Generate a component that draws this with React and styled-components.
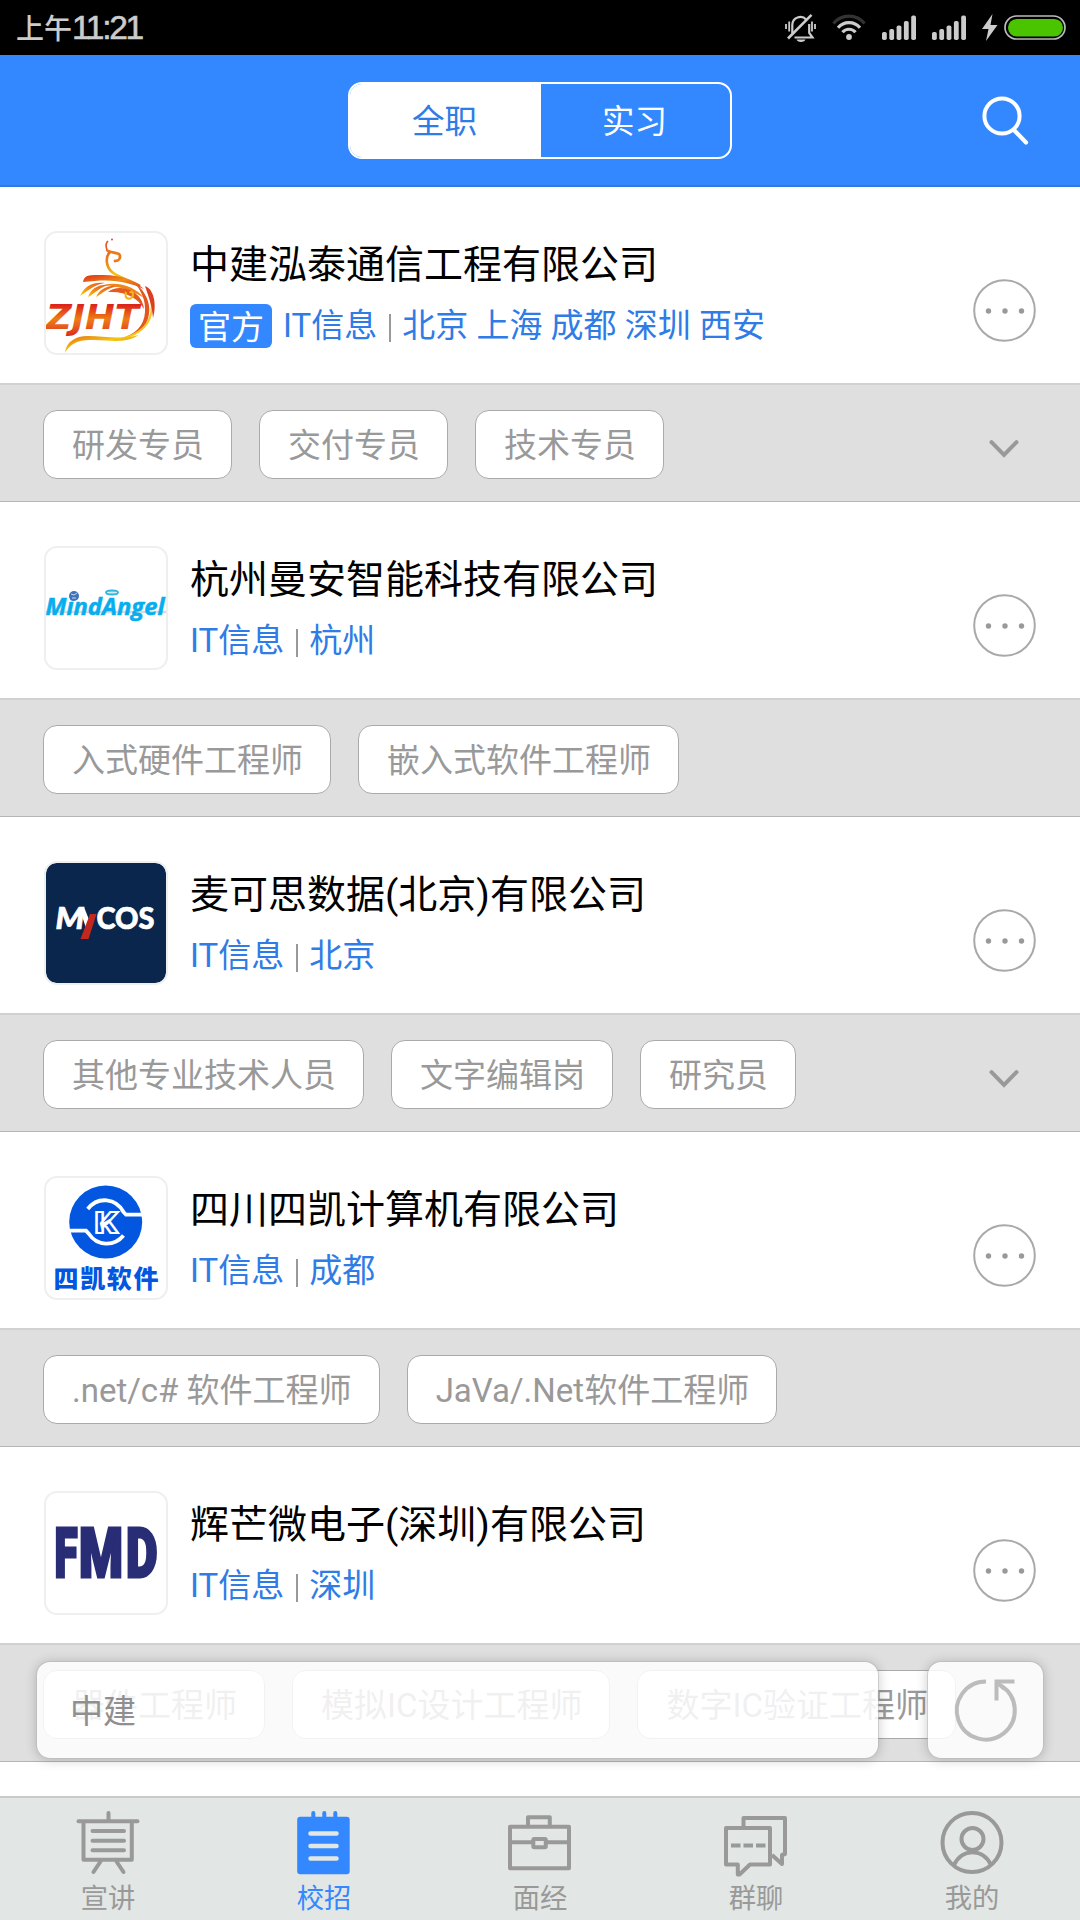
import React from "react";
import styled, { createGlobalStyle } from "styled-components";

const GlobalStyle = createGlobalStyle`
  *, *::before, *::after { box-sizing: border-box; }
  html, body { margin: 0; padding: 0; background: #fff; }
  body { font-family: Roboto, "Noto Sans CJK SC", sans-serif; }
  svg { display: block; overflow: visible; flex: none; }
`;

const Screen = styled.div`
  position: relative;
  display: flex;
  flex-direction: column;
  width: 1080px;
  height: 1920px;
  overflow: hidden;
  background: #fff;
`;

const StatusBar = styled.div`
  display: flex;
  align-items: center;
  justify-content: space-between;
  flex: none;
  height: 55px;
  padding: 0 14px 0 16px;
  background: #000;
`;

const Clock = styled.div`
  display: flex;
  align-items: baseline;
  padding-top: 2px;
  font-size: 28px;
  font-weight: 500;
  line-height: 55px;
  color: #ccc;
`;

const Digits = styled.span`
  font-family: "Liberation Sans", sans-serif;
  font-size: 33.5px;
  letter-spacing: -2.3px;
  -webkit-text-stroke: 0.6px #ccc;
`;

const StatusIcons = styled.div`
  display: flex;
  align-items: center;
  gap: 16px;
  color: #ccc;
`;

const Header = styled.header`
  display: grid;
  grid-template-columns: 1fr 384px 1fr;
  align-items: center;
  flex: none;
  height: 132px;
  padding-top: 1px;
  background: #3388ff;
  border-bottom: 2px solid #2f7ae0;
`;

const Segments = styled.div`
  grid-column: 2;
  display: flex;
  height: 77px;
  border: 2px solid #fff;
  border-radius: 14px;
  overflow: hidden;
`;

const Segment = styled.button`
  flex: ${(p) => (p.$active ? "0 0 191px" : "1")};
  padding: 3px 2px 0 0;
  border: 0;
  font: inherit;
  font-size: 32.5px;
  line-height: 70px;
  color: ${(p) => (p.$active ? "#2f7ce6" : "#fff")};
  background: ${(p) => (p.$active ? "#fff" : "transparent")};
`;

const SearchButton = styled.button`
  justify-self: end;
  display: block;
  margin-right: 51px;
  padding: 0;
  border: 0;
  background: none;
`;

const List = styled.main`
  flex: 1;
  min-height: 0;
  overflow: hidden;
`;

const Card = styled.div`
  display: flex;
  align-items: flex-start;
  height: 196px;
  padding: 44px 44px 0;
`;

const LogoBox = styled.div`
  flex: none;
  width: 124px;
  height: 124px;
  border: 2px solid #eeefef;
  border-radius: 13px;
  overflow: hidden;
  background: #fff;
`;

const Info = styled.div`
  flex: 1;
  padding: 5px 0 0 22px;
  white-space: nowrap;
`;

const Title = styled.h2`
  margin: 0;
  font-size: 39px;
  font-weight: 400;
  line-height: 58px;
  color: #000;
`;

const Meta = styled.div`
  display: flex;
  align-items: center;
  height: 44px;
  margin-top: 10px;
  font-size: 33px;
  line-height: 46px;
  color: #2f7ce6;
`;

const Badge = styled.span`
  height: 44px;
  margin-right: 11px;
  padding: 0 8px;
  border-radius: 6px;
  line-height: 47px;
  color: #fff;
  background: #3388ff;
`;

const Divider = styled.span`
  width: 2px;
  height: 28px;
  margin: 4px 11px 0 12px;
  background: #999;
`;

const MoreButton = styled.button`
  margin: 48px 0 0;
  padding: 0;
  border: 0;
  background: none;
`;

const JobStrip = styled.div`
  display: flex;
  align-items: flex-start;
  gap: 27px;
  height: 119px;
  padding: 25px 61px 0 43px;
  border-top: 2px solid #d0d1d1;
  border-bottom: 1px solid #b5b5b5;
  background: #dfdfdf;
  overflow: hidden;
`;

const Chip = styled.span`
  flex: none;
  height: 69px;
  padding: 0 27px 0 28px;
  border: 1px solid #aaa;
  border-radius: 14px;
  font-size: 33px;
  line-height: 70px;
  white-space: pre;
  color: #999;
  background: #fff;
`;

const Expand = styled.div`
  margin: 30px 0 0 auto;
`;

const Floating = styled.div`
  position: absolute;
  left: 36px;
  top: 1661px;
  display: flex;
  gap: 48px;
`;

const FloatPanel = styled.div`
  display: flex;
  align-items: center;
  justify-content: ${(p) => (p.$center ? "center" : "flex-start")};
  width: ${(p) => p.$w}px;
  height: 98px;
  padding: ${(p) => (p.$center ? "0" : "0 0 2px 33px")};
  border: 1px solid rgba(170, 170, 170, 0.6);
  border-radius: 14px;
  font-size: 33px;
  color: #8f8f8f;
  background: rgba(255, 255, 255, 0.85);
  background-clip: padding-box;
  box-shadow: 0 1px 12px rgba(0, 0, 0, 0.2);
`;

const TabBar = styled.nav`
  display: grid;
  grid-template-columns: repeat(5, 1fr);
  flex: none;
  height: 124px;
  border-top: 2px solid #c8cac9;
  background: #e2e6e4;
`;

const Tab = styled.a`
  display: flex;
  flex-direction: column;
  align-items: center;
  padding-top: 13px;
  font-size: 27.3px;
  line-height: 40px;
  color: ${(p) => (p.$active ? "#3388ff" : "#999")};
`;

const TabLabel = styled.span`
  margin-top: 2px;
`;

const Bell = () => (
  <svg width="31" height="28" viewBox="0 0 31 28" fill="none" stroke="#ccc" strokeWidth="2.2">
    <path d="M7.3 19.5V11a8 8 0 0 1 14-5.2M24.2 10v9l3.3 4.5H9.5" />
    <path d="M26.5 .8 3 24.5" strokeWidth="2.6" />
    <path d="M1 10v5M4.2 7.5v10M27 7.5v10M30 10v5" strokeWidth="1.8" />
    <path d="M11.5 25.5h9a4.6 3 0 0 1-9 0z" fill="#ccc" stroke="none" />
  </svg>
);

const Wifi = () => (
  <svg width="34" height="27" viewBox="0 0 34 27" fill="none" stroke="#ccc" strokeWidth="3.2">
    <path d="M1.5 9.5a20 20 0 0 1 31 0" stroke="#333" />
    <path d="M6 13.8a14.3 14.3 0 0 1 22 0" />
    <path d="M10.5 18.2a8.6 8.6 0 0 1 13 0" />
    <circle cx="17" cy="23" r="2.9" fill="#ccc" stroke="none" />
  </svg>
);

const BARS = [8, 11, 14.5, 19, 24.5];

const Signal = () => (
  <svg width="34" height="25" viewBox="0 0 34 25" fill="#ccc">
    {BARS.map((h, i) => (
      <rect key={h} x={i * 7.3} y={25 - h} width="4.8" height={h} rx="1.8" />
    ))}
  </svg>
);

const Power = () => (
  <svg width="84" height="27" viewBox="0 0 84 27">
    <path d="M10.5 0 0 15h6.5L4 27 15.500 11H8.500z" fill="#ccc" />
    <rect x="23" y="2" width="60" height="23" rx="11.500" fill="none" stroke="#bbb" strokeWidth="1.7" />
    <rect x="26" y="5" width="55" height="17.500" rx="8.700" fill="#4bc400" />
  </svg>
);

const Search = () => (
  <svg width="47" height="50" viewBox="0 0 47 50" fill="none" stroke="#fff" strokeLinecap="round">
    <circle cx="20" cy="20" r="17.600" strokeWidth="4" />
    <path d="M32 34 44 46.500" strokeWidth="4.200" />
  </svg>
);

const More = () => (
  <svg width="63" height="63" viewBox="0 0 63 63">
    <circle cx="31.500" cy="31.500" r="30.300" fill="none" stroke="#a9a9a9" strokeWidth="2" />
    {[15.5, 32, 48.5].map((x) => (
      <circle key={x} cx={x} cy="32" r="2.700" fill="#999" />
    ))}
  </svg>
);

const Chevron = () => (
  <svg width="30" height="18" viewBox="0 0 30 18" fill="none" stroke="#999" strokeWidth="4" strokeLinecap="round">
    <path d="M2.500 2.200 15 15 27.500 2.200" />
  </svg>
);

const Refresh = () => (
  <svg width="62" height="64" viewBox="0 0 62 64" fill="none" stroke="#bcbcbc" strokeWidth="4">
    <path d="M31 3.500A29 29 0 1 0 46 7.800" />
    <path d="M41.500 22.500V3.500H59.500" />
    <path d="M42 4.500 49 10.500" />
  </svg>
);

const ZjhtLogo = () => (
  <svg width="120" height="120" viewBox="4 4 120 120">
    <defs>
      <linearGradient id="fire" x1="0" y1="0" x2="1" y2="1">
        <stop offset="0" stopColor="#dc2d1c" />
        <stop offset=".5" stopColor="#f08c14" />
        <stop offset="1" stopColor="#e03a18" />
      </linearGradient>
      <linearGradient id="letters" x1="0" y1="0" x2="0" y2="1">
        <stop offset=".2" stopColor="#dc241c" />
        <stop offset=".55" stopColor="#ee7d14" />
        <stop offset=".72" stopColor="#e8601a" />
        <stop offset="1" stopColor="#dc241c" />
      </linearGradient>
      <linearGradient id="feather" x1="1" y1="0" x2="0" y2="1">
        <stop offset="0" stopColor="#e2521c" />
        <stop offset=".5" stopColor="#f07a16" />
        <stop offset="1" stopColor="#fbd800" />
      </linearGradient>
      <linearGradient id="body" x1="0" y1="0" x2="1" y2="1">
        <stop offset="0" stopColor="#e8641a" />
        <stop offset=".45" stopColor="#f3c60c" />
        <stop offset="1" stopColor="#e2561c" />
      </linearGradient>
    </defs>
    <circle cx="70" cy="10.500" r="1" fill="#e0443a" />
    <path d="M66 12c-4 4-1 6-1 10" fill="none" stroke="#e4572a" strokeWidth="1.700" />
    <path d="M66 22c8 3 12 1 12 6 0 3-3 4-5 4" fill="none" stroke="#ea7a1a" strokeWidth="2.800" strokeLinecap="round" />
    <path d="M68 23c-5 5-4 15 2 20 7 6 18 8 28 14" fill="none" stroke="url(#body)" strokeWidth="2.600" />
    <path d="M41 53c1-8 9-7 20-7 20 0 33 7 41 14-16-7-30-11-61-7z" fill="url(#fire)" />
    <path d="M38 67c5-10 12-14 25-13-10 1-17 8-25 13zM46 68c3-8 10-13 22-12-10 1-14 8-22 12zM54 68c4-8 11-12 22-11-11 2-15 7-22 11z" fill="url(#feather)" />
    <path d="M62 56c14-4 32 2 40 13-12-8-22-11-40-13z" fill="#ee8618" />
    <path d="M66 63c6-5 16-5 24-1 7 4 11 10 12 18-6-11-18-18-36-17z" fill="#e65a1c" />
    <path d="M84 63c-3 8 7 9 7 2 0-2-2-3-3-1" fill="none" stroke="#f3b517" strokeWidth="2.200" />
    <path d="M94 55c9 7 15 19 13 30-2 14-12 22-29 25 15-5 24-12 25-27 1-12-4-20-9-28z" fill="#e45620" />
    <path d="M107 60c7 22 3 43-29 50" fill="none" stroke="#f7c817" strokeWidth="2.200" />
    <path d="M103 57c9 3 12 19 8 32-1-13-4-20-8-32z" fill="#dd3e20" />
    <path d="M23 124c1-11 10-17 23-17 16 0 31 4 51-1-16 10-32 4-49 5-13 0-20 4-25 13z" fill="url(#body)" />
    <text x="4" y="100" fontFamily="DejaVu Sans" fontWeight="700" fontStyle="italic" fontSize="34" textLength="93" lengthAdjust="spacingAndGlyphs" fill="url(#letters)">ZJHT</text>
  </svg>
);

const MindAngelLogo = () => (
  <svg width="120" height="120" viewBox="2 2 120 120">
    <path d="M2 66h120" stroke="#d9d9d9" strokeWidth="2.500" />
    <text x="1.500" y="69" fontFamily="Open Sans" fontWeight="700" fontStyle="italic" fontSize="23.500" textLength="119" lengthAdjust="spacingAndGlyphs" fill="#06aeef" stroke="#06aeef" strokeWidth=".5">MindAngel</text>
    <circle cx="30" cy="50" r="5" fill="#3f74bb" />
    <path d="M27 48l3 1 3-2M28 52h4" stroke="#c4d9ef" fill="none" />
    <ellipse cx="68" cy="46.500" rx="6" ry="2" fill="#d6e8ee" stroke="#2fb4dd" strokeWidth="1.800" />
  </svg>
);

const MycosLogo = () => (
  <svg width="120" height="120" viewBox="2 2 120 120">
    <rect x="2" y="2" width="120" height="120" rx="10" fill="#0a264c" />
    <g fill="#fff" stroke="#fff" strokeWidth=".7" fontFamily="Lato" fontWeight="900" fontSize="31">
      <text x="11.500" y="67.500" textLength="29" lengthAdjust="spacingAndGlyphs" fontStyle="italic">M</text>
      <text x="52.500" y="67.500" textLength="58" lengthAdjust="spacingAndGlyphs">COS</text>
    </g>
    <path d="M35 46 40 46 45.500 60 42 67z" fill="#fff" />
    <path d="M46 53h6.500L44.500 78H36.500z" fill="#c3281f" />
  </svg>
);

const SikaiLogo = () => (
  <svg width="120" height="120" viewBox="2 2 120 120">
    <circle cx="61.700" cy="46" r="36.500" fill="#0356e0" />
    <g fill="none" stroke="#fff" strokeWidth="3.800">
      <path d="M43.700 33C54 20 72 22 79.500 36l2.500 2.700h17" />
      <path d="M24.500 54.700H42L45 58c8 12 25 13 34.500 1.500" />
    </g>
    <text x="50.500" y="56.500" fontFamily="Roboto" fontWeight="900" fontSize="29" textLength="23" lengthAdjust="spacingAndGlyphs" fill="#0356e0" stroke="#fff" strokeWidth="2">K</text>
    <text x="9.500" y="112" fontFamily="Noto Sans CJK SC" fontWeight="900" fontSize="25" textLength="105" fill="#0356e0">四凯软件</text>
  </svg>
);

const FmdLogo = () => (
  <svg width="120" height="120" viewBox="2 2 120 120">
    <g fill="#282d75" stroke="#282d75" strokeWidth="3" fontFamily="Roboto" fontWeight="900" fontSize="68.500">
      <text x="10.500" y="85.800" textLength="23" lengthAdjust="spacingAndGlyphs">F</text>
      <text x="35" y="85.800" textLength="44" lengthAdjust="spacingAndGlyphs">M</text>
      <text x="82" y="85.800" textLength="31.500" lengthAdjust="spacingAndGlyphs">D</text>
    </g>
  </svg>
);

const tabIconProps = { width: 64, height: 66, viewBox: "0 0 64 66", fill: "none", stroke: "currentColor", strokeWidth: 4 };

const BoardIcon = () => (
  <svg {...tabIconProps} strokeLinecap="round" strokeLinejoin="round">
    <path d="M32.500 2v8M2.500 10.300h59M7.500 10.300v38.500h48.300V10.300M16.500 20h31.500M16.500 29.700h31.500M16.500 39.200h31.500M24.500 50.500 17.500 61M40.500 50.500 47.500 61" />
  </svg>
);

const NoteIcon = () => (
  <svg {...tabIconProps} strokeLinecap="round">
    <rect x="5.200" y="5.700" width="52.500" height="57.500" rx="3" fill="currentColor" stroke="none" />
    <path d="M21.300 2v6M32.300 2v6M43.300 2v6" />
    <path d="M18.500 22.500H44.500M18.500 35H44.500M18.500 47.500H44.500" stroke="#e2e6e4" strokeWidth="4.500" />
  </svg>
);

const CaseIcon = () => (
  <svg {...tabIconProps} strokeLinejoin="round">
    <path d="M2 15.800h59v41.500H2zM20 15V6.300h21.800V15M2 31.300h22M39 31.300h22" />
    <rect x="25.300" y="28" width="12.500" height="8.200" rx="1" />
  </svg>
);

const ChatIcon = () => (
  <svg {...tabIconProps} strokeLinejoin="round">
    <path d="M19.500 15V7H61v36l-3 1v9l-10-9" />
    <path d="M2 17h44v36.500H26L15.500 63.500h-1.700v-10H2z" />
    <path d="M7 34.500h9.500M19.500 34.500H29M32 34.500h9.500" />
  </svg>
);

const UserIcon = () => (
  <svg {...tabIconProps}>
    <circle cx="32" cy="31.500" r="29.500" />
    <circle cx="32.500" cy="28" r="11" />
    <path d="M14 54c8-17 29-17 37 0" />
  </svg>
);

const companies = [
  { name: "中建泓泰通信工程有限公司", official: true, cities: "北京 上海 成都 深圳 西安", jobs: ["研发专员", "交付专员", "技术专员"], more: true, Logo: ZjhtLogo },
  { name: "杭州曼安智能科技有限公司", cities: "杭州", jobs: ["入式硬件工程师", "嵌入式软件工程师"], Logo: MindAngelLogo },
  { name: "麦可思数据(北京)有限公司", cities: "北京", jobs: ["其他专业技术人员", "文字编辑岗", "研究员"], more: true, Logo: MycosLogo },
  { name: "四川四凯计算机有限公司", cities: "成都", jobs: [".net/c# 软件工程师", "JaVa/.Net软件工程师"], Logo: SikaiLogo },
  { name: "辉芒微电子(深圳)有限公司", cities: "深圳", jobs: ["器件工程师", "模拟IC设计工程师", "数字IC验证工程师"], Logo: FmdLogo },
];

const tabs = [
  { label: "宣讲", Icon: BoardIcon },
  { label: "校招", Icon: NoteIcon, active: true },
  { label: "面经", Icon: CaseIcon },
  { label: "群聊", Icon: ChatIcon },
  { label: "我的", Icon: UserIcon },
];

function Company({ name, official, cities, jobs, more, Logo }) {
  return (
    <section>
      <Card>
        <LogoBox><Logo /></LogoBox>
        <Info>
          <Title>{name}</Title>
          <Meta>
            {official && <Badge>官方</Badge>}
            <span>IT信息</span>
            <Divider />
            <span>{cities}</span>
          </Meta>
        </Info>
        <MoreButton><More /></MoreButton>
      </Card>
      <JobStrip>
        {jobs.map((job) => <Chip key={job}>{job}</Chip>)}
        {more && <Expand><Chevron /></Expand>}
      </JobStrip>
    </section>
  );
}

export default function App() {
  return (
    <Screen>
      <GlobalStyle />
      <StatusBar>
        <Clock>上午<Digits>11:21</Digits></Clock>
        <StatusIcons><Bell /><Wifi /><Signal /><Signal /><Power /></StatusIcons>
      </StatusBar>
      <Header>
        <Segments>
          <Segment $active>全职</Segment>
          <Segment>实习</Segment>
        </Segments>
        <SearchButton><Search /></SearchButton>
      </Header>
      <List>
        {companies.map((c) => <Company key={c.name} {...c} />)}
      </List>
      <Floating>
        <FloatPanel $w={843}>中建</FloatPanel>
        <FloatPanel $w={117} $center><Refresh /></FloatPanel>
      </Floating>
      <TabBar>
        {tabs.map(({ label, Icon, active }) => (
          <Tab key={label} $active={active}>
            <Icon />
            <TabLabel>{label}</TabLabel>
          </Tab>
        ))}
      </TabBar>
    </Screen>
  );
}
